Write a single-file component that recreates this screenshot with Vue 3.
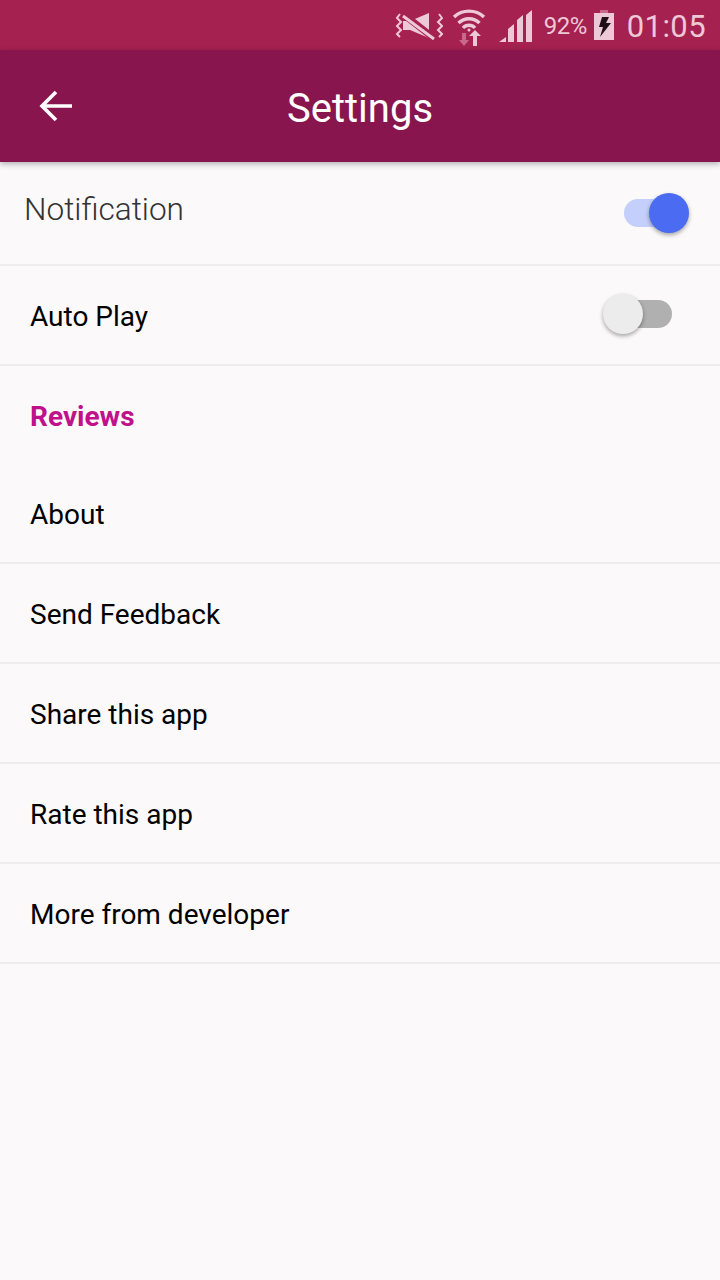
<template>
  <div class="screen">
    <div class="status-bar">
      <svg class="ic-mute" width="48" height="30" viewBox="0 0 48 30">
        <path d="M8 11h7l19-8v25l-19-8H8z" fill="#edc8d6" />
        <path d="M8 4l32 25" stroke="#a5214f" stroke-width="7" fill="none" />
        <path d="M8 6l31 23" stroke="#edc8d6" stroke-width="3" fill="none" />
        <path d="M5 4L2 8l4 4-4 4 4 4-4 4 3 3M44 4l3 4-4 4 4 4-4 4 4 4-3 3" stroke="#edc8d6" stroke-width="2" fill="none" />
      </svg>
      <svg class="ic-wifi" width="34" height="38" viewBox="0 0 34 38">
        <path d="M2 8a22 22 0 0 1 30 0M6.500 14a15 15 0 0 1 21 0M11 19a8 8 0 0 1 12 0" stroke="#edc8d6" stroke-width="3.400" fill="none" />
        <circle cx="17" cy="21" r="1.500" fill="#edc8d6" />
        <path d="M10 24h4v7h3l-5 6-5-6h3z" fill="#c9688d" />
        <path d="M23 21l6 6h-4v10h-4V27h-4z" fill="#edc8d6" />
      </svg>
      <svg class="ic-signal" width="34" height="32" viewBox="0 0 34 32">
        <path d="M0 32l7-5v5zM9 32V19l6-5v18zM18 32V10l6-5v27zM27 32V5l6-5v32z" fill="#edc8d6" />
      </svg>
      <span class="battery-text">92%</span>
      <svg class="ic-battery" width="22" height="30" viewBox="0 0 22 30">
        <path d="M7 0h8v3H7z" fill="#c9688d" />
        <path d="M1 3h20v27H1z" fill="#edc8d6" />
        <path d="M9 7h7l-3 6h5L7 27l3-10H6z" fill="#1e1016" />
      </svg>
      <span class="clock">01:05</span>
    </div>

    <header class="app-bar">
      <button class="back" aria-label="Back">
        <svg width="36" height="36" viewBox="0 0 36 36">
          <path d="M34 18H5M18 4L4 18l14 14" stroke="#fff" stroke-width="3.600" fill="none" />
        </svg>
      </button>
      <h1>Settings</h1>
    </header>

    <div class="row row-notification">
      <span class="notification-label">Notification</span>
      <div class="switch switch-on"><span class="track"></span><span class="thumb"></span></div>
    </div>
    <div class="row row-autoplay">
      <span>Auto Play</span>
      <div class="switch switch-off"><span class="track"></span><span class="thumb"></span></div>
    </div>

    <div class="section-title">Reviews</div>

    <div class="row item" v-for="item in items" :key="item">
      <span>{{ item }}</span>
    </div>
  </div>
</template>

<script setup>
const items = ['About', 'Send Feedback', 'Share this app', 'Rate this app', 'More from developer']
</script>

<style>
html,
body {
  margin: 0;
  background: #fbf9fa;
}
</style>

<style scoped>
.screen {
  width: 720px;
  height: 1280px;
  overflow: hidden;
  background: #fbf9fa;
  font-family: Roboto, sans-serif;
  color: #000;
}

.status-bar {
  height: 50px;
  box-sizing: border-box;
  background: #a5214f;
  color: #edc8d6;
  display: flex;
  align-items: center;
  justify-content: flex-end;
  padding-right: 14px;
}

.ic-mute {
  margin-right: 9px;
}

.ic-wifi {
  margin-right: 13px;
  margin-top: 6px;
}

.ic-signal {
  margin-right: 11px;
  margin-top: 2px;
}

.battery-text {
  font-size: 24px;
  margin-right: 6px;
  letter-spacing: -0.5px;
  margin-top: 2px;
}

.ic-battery {
  margin-right: 12px;
}

.clock {
  font-size: 31px;
  letter-spacing: 0.4px;
  margin-top: 2px;
}

.app-bar {
  position: relative;
  z-index: 1;
  height: 112px;
  background: #88154d;
  box-shadow: 0 2px 6px rgba(0, 0, 0, 0.3);
  display: flex;
  align-items: center;
  justify-content: center;
}

.app-bar h1 {
  margin: 0;
  font-size: 40px;
  font-weight: 400;
  color: #fff;
  padding-top: 4px;
}

.back {
  position: absolute;
  left: 38px;
  top: 38px;
  padding: 0;
  border: 0;
  background: none;
  line-height: 0;
}

.row {
  height: 100px;
  box-sizing: border-box;
  display: flex;
  align-items: center;
  justify-content: space-between;
  padding: 2px 30px 0;
  border-bottom: 2px solid #eeecec;
  font-size: 28px;
}

.row-notification {
  height: 104px;
  padding: 0 24px;
}

.notification-label {
  font-size: 31.6px;
  font-weight: 300;
  color: #333;
  margin-top: -7px;
}

.section-title {
  height: 98px;
  box-sizing: border-box;
  padding: 34px 30px 0;
  font-size: 28px;
  font-weight: 700;
  color: #c0118a;
}

.switch {
  position: relative;
  width: 80px;
  height: 42px;
}

.switch-on {
  margin-right: 8px;
  margin-top: 1px;
}

.switch-off {
  margin-right: 7px;
  margin-top: -2px;
}

.track {
  position: absolute;
  border-radius: 14px;
  height: 28px;
}

.thumb {
  position: absolute;
  width: 40px;
  height: 40px;
  top: 0;
  border-radius: 50%;
  box-shadow: 0 2px 4px rgba(0, 0, 0, 0.35);
}

.switch-on .track {
  left: 16px;
  width: 50px;
  top: 6px;
  background: #c5cffb;
}

.switch-on .thumb {
  left: 41px;
  background: #4a6bf2;
}

.switch-off .track {
  left: 18px;
  width: 51px;
  top: 6px;
  background: #b0b0b0;
}

.switch-off .thumb {
  left: 0;
  background: #ececec;
}
</style>
